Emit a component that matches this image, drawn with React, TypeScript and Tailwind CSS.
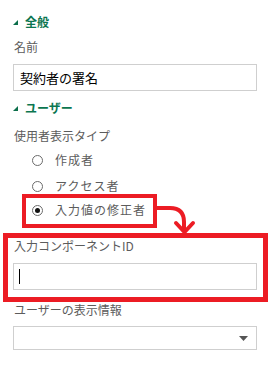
export default function App() {
  const radios = [
    { label: "作成者", checked: false, mt: "mt-[6px]" },
    { label: "アクセス者", checked: false, mt: "mt-[6px]" },
    { label: "入力値の修正者", checked: true, mt: "mt-[4px]" },
  ];

  return (
    <div
      className="relative w-[273px] h-[378px] bg-white overflow-hidden"
      style={{ fontFamily: '"Noto Sans CJK JP", "Noto Sans", sans-serif' }}
    >
      <div className="pl-[13px] pr-[16px]">
        {/* 全般 */}
        <div className="mt-[14px] h-[16px] flex items-center gap-[7px] text-[#0b7650] text-[12px] font-bold">
          <svg width="5" height="5" viewBox="0 0 5 5">
            <polygon points="5,0 5,5 0,5" fill="#0b6e4a" />
          </svg>
          <span>全般</span>
        </div>
        <div className="mt-[9px] h-[16px] flex items-center pl-[1px] text-[12px] text-[#5c5c5c]">名前</div>
        <div className="mt-[9px] h-[27px] border border-[#cfcfcf] flex items-center px-[6px] text-[13px] text-black">
          契約者の署名
        </div>

        {/* ユーザー */}
        <div className="mt-[9px] h-[16px] flex items-center gap-[7px] text-[#0b7650] text-[12px] font-bold">
          <svg width="5" height="5" viewBox="0 0 5 5">
            <polygon points="5,0 5,5 0,5" fill="#0b6e4a" />
          </svg>
          <span>ユーザー</span>
        </div>
        <div className="mt-[12px] h-[16px] flex items-center pl-[1px] text-[12px] text-[#5c5c5c]">使用者表示タイプ</div>

        {radios.map((r) => (
          <div key={r.label} className={`${r.mt} h-[20px] flex items-center pl-[19px] gap-[12px]`}>
            <span className="w-[11px] h-[11px] rounded-full border border-[#6b6b6b] flex items-center justify-center bg-white">
              {r.checked && <span className="w-[5px] h-[5px] rounded-full bg-[#111]" />}
            </span>
            <span className="text-[12px] text-[#5c5c5c] tracking-[1px]">{r.label}</span>
          </div>
        ))}

        <div className="mt-[18px] h-[16px] flex items-center pl-[1px] text-[12px] text-[#5c5c5c]">入力コンポーネントID</div>
        <div className="mt-[9px] h-[27px] border border-[#cfcfcf] flex items-center px-[5px]">
          <span className="w-[1px] h-[15px] bg-black" />
        </div>

        <div className="mt-[12px] h-[16px] flex items-center pl-[1px] text-[12px] text-[#5c5c5c]">ユーザーの表示情報</div>
        <div className="mt-[8px] h-[24px] border border-[#cfcfcf] flex items-center justify-end pr-[8px]">
          <svg width="9" height="5" viewBox="0 0 9 5">
            <polygon points="0,0 9,0 4.5,5" fill="#555" />
          </svg>
        </div>
      </div>

      {/* annotations */}
      <div className="absolute left-[22px] top-[194px] w-[135px] h-[34px] border-[4px] border-[#ec1c24]" />
      <div className="absolute left-[3px] top-[233px] w-[265px] h-[69px] border-[5px] border-[#ec1c24]" />
      <svg className="absolute left-0 top-0" width="273" height="378" viewBox="0 0 273 378">
        <path d="M155 208 H170 Q184 208 184 222 V231" fill="none" stroke="#ec1c24" strokeWidth="4" />
        <path d="M176 223 L184.5 232 L193 223" fill="none" stroke="#ec1c24" strokeWidth="4" strokeLinecap="round" />
      </svg>
    </div>
  );
}
